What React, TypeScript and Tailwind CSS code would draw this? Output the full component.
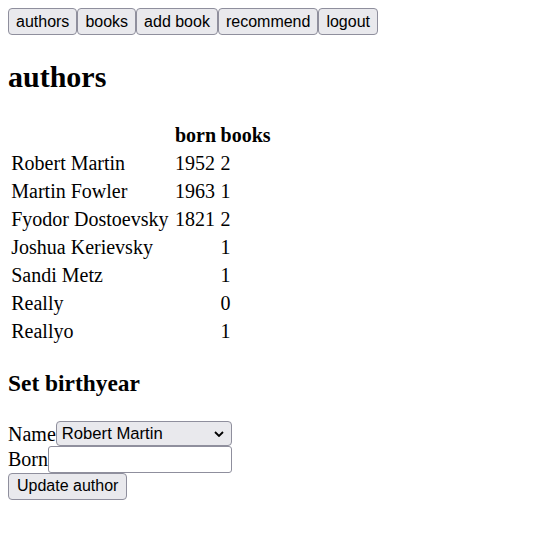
const authors = [
  { name: "Robert Martin", born: "1952", books: 2 },
  { name: "Martin Fowler", born: "1963", books: 1 },
  { name: "Fyodor Dostoevsky", born: "1821", books: 2 },
  { name: "Joshua Kerievsky", born: "", books: 1 },
  { name: "Sandi Metz", born: "", books: 1 },
  { name: "Really", born: "", books: 0 },
  { name: "Reallyo", born: "", books: 1 },
];

const navItems = ["authors", "books", "add book", "recommend", "logout"];

const btn =
  "h-[27px] px-[7px] rounded-[4px] border border-[#8f8f9d] bg-[#e9e9ed] text-black text-[16px] leading-none [font-family:'Liberation_Sans',Arial,sans-serif]";

export default function App() {
  return (
    <main className="min-h-screen bg-white p-[8px] text-black text-[20px] [font-family:'Liberation_Serif','Times_New_Roman',serif]">
      <div className="flex">
        {navItems.map((n) => (
          <button key={n} className={btn}>
            {n}
          </button>
        ))}
      </div>

      <h2 className="my-[25px] text-[30px] font-bold leading-[34.5px]">authors</h2>

      <table className="mt-[1px] border-separate border-spacing-[2.5px]">
        <tbody>
          <tr>
            <th className="p-[1.25px] leading-[23.5px]"></th>
            <th className="p-[1.25px] pt-[2px] font-bold text-center leading-[23.5px]">born</th>
            <th className="p-[1.25px] pt-[2px] font-bold text-center leading-[23.5px]">books</th>
          </tr>
          {authors.map((a) => (
            <tr key={a.name}>
              <td className="p-[1.25px] pr-[3.25px] text-left leading-[23.5px]">{a.name}</td>
              <td className="p-[1.25px] text-left leading-[23.5px]">{a.born}</td>
              <td className="p-[1.25px] text-left leading-[23.5px]">{a.books}</td>
            </tr>
          ))}
        </tbody>
      </table>

      <div>
        <h3 className="my-[23.4px] text-[23.4px] font-bold leading-[27px]">Set birthyear</h3>
        <form className="flex flex-col items-start">
          <div className="flex items-end h-[25.5px]">
            <span className="leading-[23px]">Name</span>
            <div className="relative flex">
              <select className="appearance-none h-[25px] w-[176px] pl-[5px] pt-[2px] rounded-[4px] border border-[#8f8f9d] bg-[#e9e9ed] text-[16.67px] leading-none [font-family:'Liberation_Sans',Arial,sans-serif]">
                {authors.map((a) => (
                  <option key={a.name}>{a.name}</option>
                ))}
              </select>
              <svg
                className="pointer-events-none absolute right-[8px] top-[10px]"
                width="10"
                height="6"
                viewBox="0 0 10 6"
              >
                <path d="M1 1l4 4l4-4" fill="none" stroke="#000" strokeWidth="1.8" />
              </svg>
            </div>
          </div>
          <div className="flex items-center h-[27px]">
            <span className="leading-[23px]">Born</span>
            <input className="h-[27px] w-[184px] rounded-[3px] border border-[#8f8f9d] bg-white px-[2px]" />
          </div>
          <button type="button" className={btn + " h-[26px] px-[8px]"}>
            Update author
          </button>
        </form>
      </div>
    </main>
  );
}
